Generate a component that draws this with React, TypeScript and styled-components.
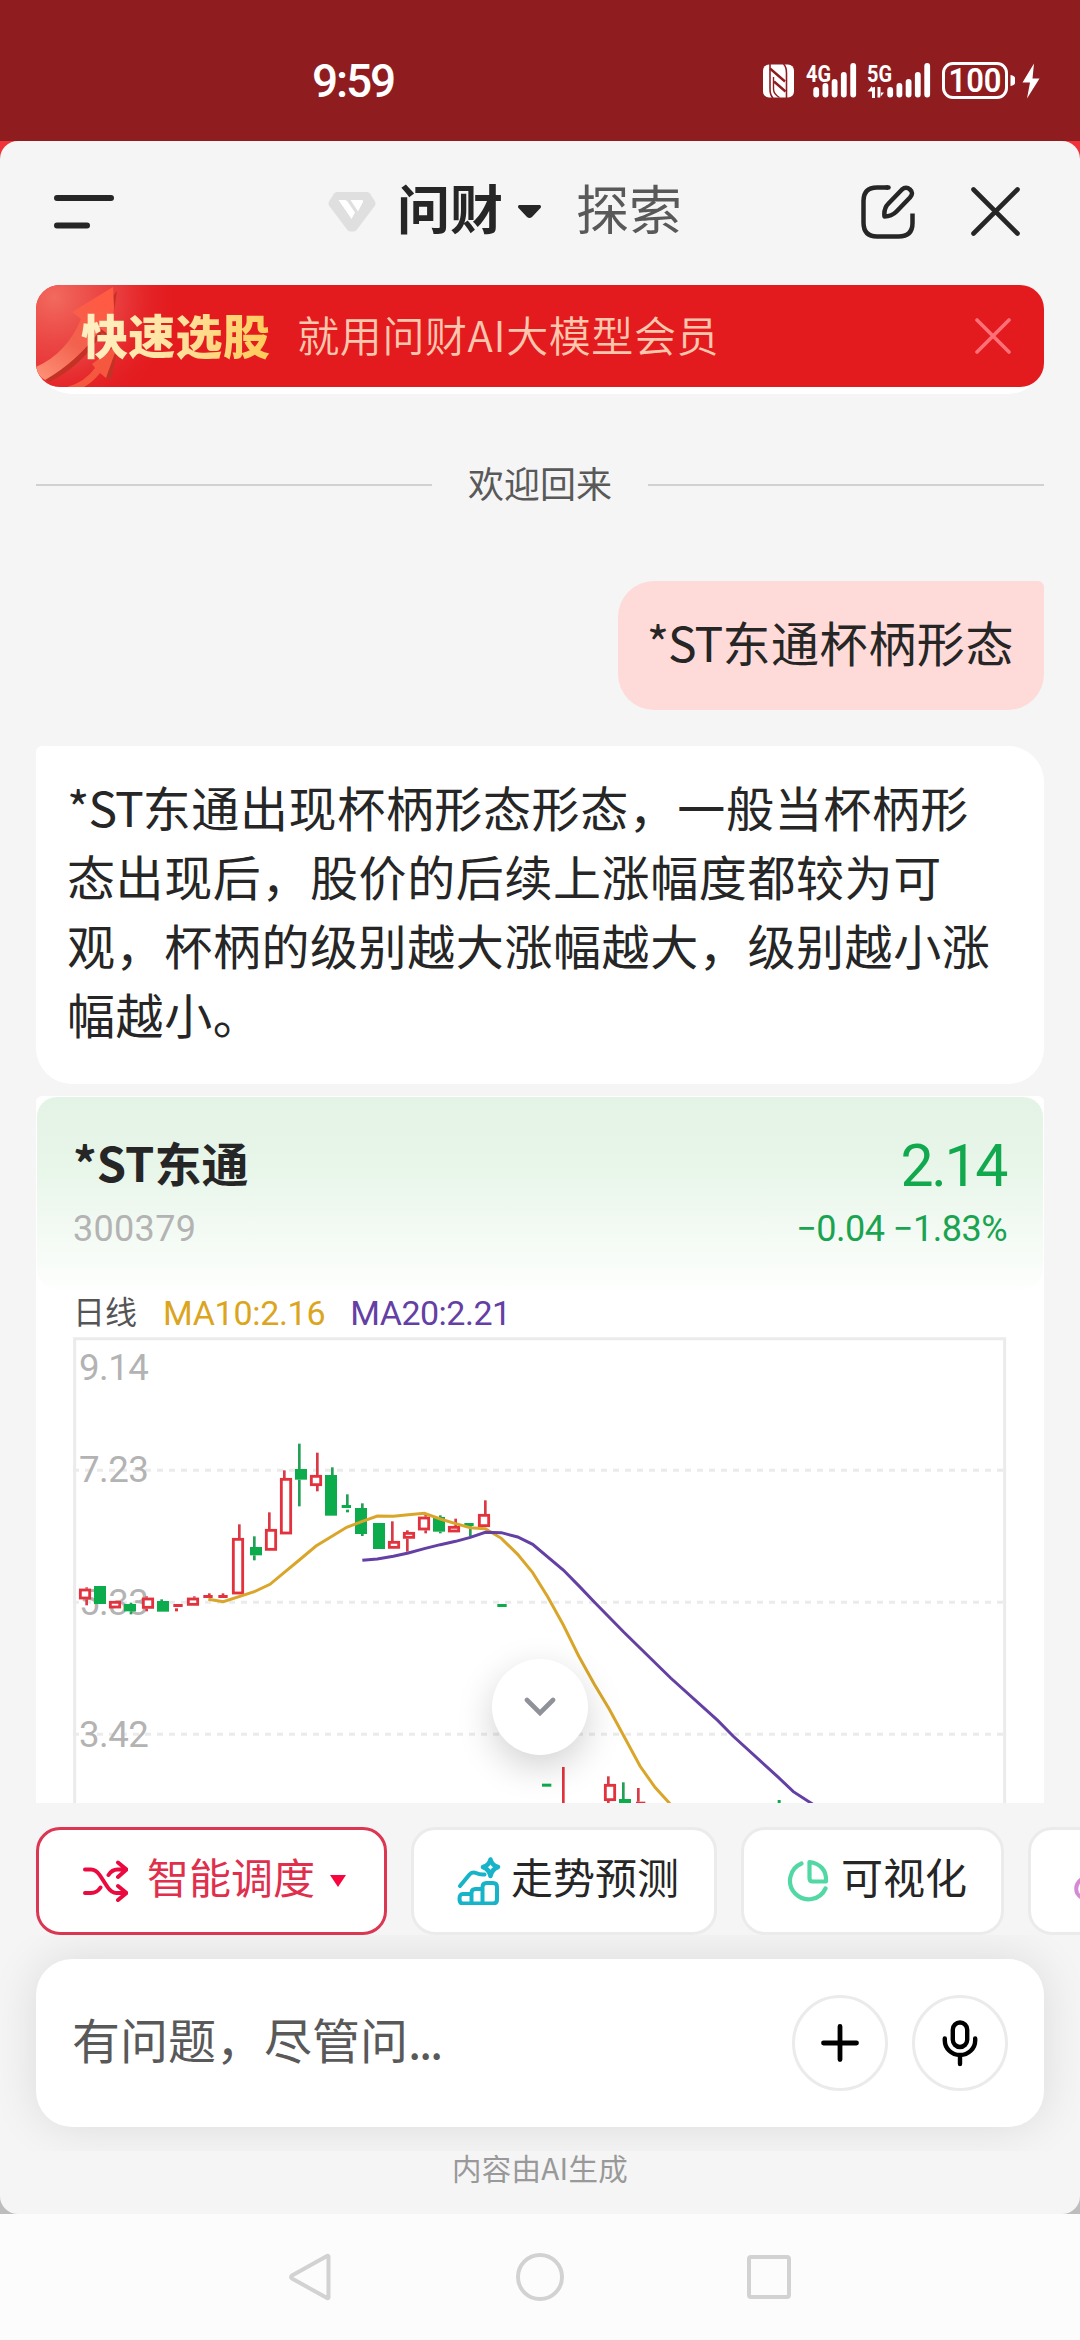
import React from 'react';
import styled, { createGlobalStyle } from 'styled-components';

const CJK = '"Noto Sans CJK SC", "Noto Sans", sans-serif';
const NUM = 'Roboto, "Noto Sans CJK SC", sans-serif';

const GlobalStyle = createGlobalStyle`
  * { box-sizing: border-box; }
  body { margin: 0; background: #fcfcfc; font-family: ${CJK}; }
`;

const Screen = styled.div`
  width: 1080px;
  height: 2340px;
  display: flex;
  flex-direction: column;
  overflow: hidden;
`;

const StatusBar = styled.header`
  height: 141px;
  flex: none;
  background: #8f1d20;
  color: #fff;
  display: flex;
  align-items: flex-start;
  justify-content: space-between;
  padding: 55px 40px 0 312px;
`;

const Clock = styled.span`
  font: 500 46px/53px ${NUM};
  letter-spacing: -2.1px;
`;

const StatusIcons = styled.svg`
  width: 278px;
  height: 40px;
  margin-top: 6px;
  display: block;
`;

const Backdrop = styled.div`
  height: 2073px;
  flex: none;
  background: linear-gradient(#f0323a 50%, #bdbdbd 50%);
`;

const Sheet = styled.main`
  height: 100%;
  background: #f5f5f5;
  border-radius: 18px;
  display: flex;
  flex-direction: column;
  overflow: hidden;
`;

const TopBar = styled.div`
  height: 144px;
  flex: none;
  display: grid;
  grid-template-columns: 274px 1fr 274px;
  align-items: center;
  padding: 0 60px 3px 54px;
`;

const IconSvg = styled.svg<{ $w: number; $h: number }>`
  width: ${p => p.$w}px;
  height: ${p => p.$h}px;
  display: block;
  flex: none;
`;

const Tabs = styled.nav`
  display: flex;
  align-items: center;
`;

const Tab = styled.span<{ $active?: boolean }>`
  font-size: 53px;
  line-height: 70px;
  font-weight: ${p => (p.$active ? 700 : 400)};
  color: ${p => (p.$active ? '#262626' : '#595959')};
  margin-left: ${p => (p.$active ? 21 : 35)}px;
  margin-right: ${p => (p.$active ? 15 : 0)}px;
  margin-top: -9px;
  white-space: nowrap;
`;

const Actions = styled.div`
  display: flex;
  justify-content: flex-end;
  align-items: center;
  gap: 56px;
`;

const BannerBase = styled.div`
  margin: 0 36px;
  height: 109px;
  flex: none;
  background: #fff;
  border-radius: 24px 24px 36px 36px;
`;

const Banner = styled.div`
  height: 102px;
  border-radius: 24px;
  overflow: hidden;
  position: relative;
  background: #e31b1f;
  display: flex;
  align-items: center;
  padding: 0 33px 0 45px;
`;

const BannerArt = styled.svg`
  position: absolute;
  left: 0;
  top: 0;
  width: 240px;
  height: 102px;
`;

const BannerTitle = styled.strong`
  position: relative;
  font-size: 47px;
  line-height: 64px;
  font-weight: 900;
  letter-spacing: 0.3px;
  margin-top: -4px;
  background: linear-gradient(100deg, #ffefc0 10%, #ffe09a 55%, #ffcb5c 95%);
  -webkit-background-clip: text;
  background-clip: text;
  color: transparent;
`;

const BannerText = styled.span`
  flex: 1;
  margin: -4px 0 0 27px;
  font-size: 42px;
  line-height: 60px;
  font-weight: 350;
  letter-spacing: 0.6px;
  color: #ffc6ae;
  white-space: nowrap;
`;

const Welcome = styled.div`
  height: 54px;
  margin: 64px 36px 69px;
  flex: none;
  display: flex;
  align-items: center;
  gap: 36px;
  font-size: 36px;
  line-height: 50px;
  color: #595959;
  &::before,
  &::after {
    content: '';
    flex: 1;
    height: 2px;
    background: #d0d1d0;
  }
`;

const WelcomeText = styled.span`
  margin-top: -6px;
`;

const Tight = styled.span`
  letter-spacing: -1px;
`;

const UserBubble = styled.div`
  align-self: flex-end;
  flex: none;
  height: 129px;
  margin-right: 36px;
  padding: 24px 30px 0 29px;
  background: #fedbd9;
  border-radius: 36px 6px 36px 36px;
  font-size: 48px;
  line-height: 72px;
  letter-spacing: 0.6px;
  color: #262626;
`;

const ReplyBubble = styled.div`
  flex: none;
  height: 338px;
  margin: 36px 36px 12px;
  padding: 26px 31px 0;
  background: #fff;
  border-radius: 6px 36px 36px 36px;
  font-size: 48px;
  line-height: 69px;
  letter-spacing: 0.6px;
  color: #262626;
  white-space: nowrap;
`;

const StockCard = styled.section`
  flex: none;
  height: 707px;
  margin: 0 36px;
  padding: 1px 1px 0;
  background: #fff;
  border-radius: 6px 6px 0 0;
  overflow: hidden;
  position: relative;
`;

const Quote = styled.div`
  height: 192px;
  border-radius: 20px;
  background: linear-gradient(#e3f3e5, #e9f6ea 40%, #fdfefd);
  padding: 30px 36px 0;
`;

const QuoteRow = styled.div<{ $h: number }>`
  display: flex;
  justify-content: space-between;
  align-items: center;
  height: ${p => p.$h}px;
`;

const StockName = styled.span`
  font-size: 47px;
  line-height: 68px;
  font-weight: 700;
  margin-top: -2px;
  color: #262626;
`;

const Price = styled.span`
  font: 400 59px/70px ${NUM};
  letter-spacing: -2.4px;
  margin: 6px 1px 0 0;
  color: #12a84d;
`;

const StockCode = styled.span`
  font: 400 36px/44px ${NUM};
  letter-spacing: 0.3px;
  margin-top: 5px;
  color: #b3b3b3;
`;

const Change = styled.span`
  font: 400 36px/44px ${NUM};
  letter-spacing: -0.5px;
  margin-top: 5px;
  color: #1aa350;
`;

const Legend = styled.div`
  display: flex;
  align-items: center;
  height: 47px;
  padding-left: 36px;
`;

const Period = styled.span`
  font-size: 32px;
  line-height: 44px;
  color: #555;
  margin: -5px 26px 0 0;
`;

const Average = styled.span<{ $color: string; $tracking: number }>`
  font: 400 34px/44px ${NUM};
  letter-spacing: ${p => p.$tracking}px;
  color: ${p => p.$color};
  margin-right: 25px;
`;

const Chart = styled.svg`
  display: block;
  width: 934px;
  height: 467px;
  margin-left: 36px;
`;

const ScrollDown = styled.button`
  position: absolute;
  left: 456px;
  top: 563px;
  width: 96px;
  height: 96px;
  padding: 0;
  border: 0;
  border-radius: 50%;
  background: #fff;
  box-shadow: 0 12px 36px rgba(0, 0, 0, 0.18);
  display: flex;
  align-items: center;
  justify-content: center;
`;

const Chips = styled.div`
  flex: none;
  height: 132px;
  padding: 24px 0 0 36px;
  display: flex;
  gap: 24px;
  overflow: hidden;
`;

const Chip = styled.button<{ $w: number; $active?: boolean }>`
  flex: none;
  width: ${p => p.$w}px;
  height: 108px;
  border: 3px solid ${p => (p.$active ? '#db3652' : '#ebebeb')};
  border-radius: 24px;
  background: #fff;
  padding: 0 0 0 43px;
  display: flex;
  align-items: center;
  font-family: ${CJK};
  font-size: 42px;
  line-height: 60px;
  color: ${p => (p.$active ? '#e02f4c' : '#262626')};
  white-space: nowrap;
`;

const ChipLabel = styled.span<{ $gap: number }>`
  margin: -10px 0 0 ${p => p.$gap}px;
`;

const Caret = styled.i`
  margin-left: 15px;
  border: solid transparent;
  border-width: 12px 8px 0;
  border-top-color: #f8043f;
`;

const Composer = styled.div`
  flex: none;
  height: 216px;
  padding: 24px 36px;
  overflow: hidden;
`;

const InputBox = styled.div`
  height: 168px;
  border-radius: 36px;
  background: #fff;
  box-shadow: 0 0 48px rgba(0, 0, 0, 0.11);
  display: flex;
  align-items: center;
  gap: 24px;
  padding: 0 36px;
`;

const Placeholder = styled.span`
  flex: 1;
  font-size: 48px;
  line-height: 70px;
  margin-top: -10px;
  color: #595959;
`;

const Ellipsis = styled.span`
  letter-spacing: -2.4px;
`;

const RoundButton = styled.button`
  width: 96px;
  height: 96px;
  padding: 0;
  border: 3px solid #ebebeb;
  border-radius: 50%;
  background: #fff;
  display: flex;
  align-items: center;
  justify-content: center;
`;

const Disclaimer = styled.p`
  margin: -2px 0 0;
  text-align: center;
  font-size: 29.5px;
  line-height: 36px;
  letter-spacing: 0.3px;
  color: #999;
`;

const NavBar = styled.footer`
  flex: none;
  height: 126px;
  background: #fcfcfc;
  display: flex;
  justify-content: center;
  align-items: center;
  gap: 182px;
`;

/* Chart geometry is stored in thirds of a CSS pixel. */
type Candle = {
  x: number;
  top: number;
  bottom: number;
  up?: boolean;
  wick?: number;
  hi?: number;
  lo?: number;
  w?: number;
};

const candles: Candle[] = [
  { x: 57, top: 806, bottom: 838, up: true, wick: 80, hi: 802, lo: 856 },
  { x: 102, top: 798, bottom: 852 },
  { x: 147, top: 843, bottom: 865, up: true },
  { x: 192, top: 852, bottom: 874, wick: 213, hi: 848, lo: 883 },
  { x: 246, top: 833, bottom: 866, up: true, wick: 260, hi: 829, lo: 874 },
  { x: 291, top: 843, bottom: 875, wick: 305, hi: 838 },
  { x: 340, top: 852, bottom: 861, up: true, w: 28 },
  { x: 345, top: 865, bottom: 874, up: true, w: 9 },
  { x: 381, top: 833, bottom: 857, up: true, wick: 403, hi: 829 },
  { x: 430, top: 825, bottom: 834, up: true, wick: 448, hi: 820, w: 28 },
  { x: 475, top: 825, bottom: 834, up: true, wick: 489, hi: 820, w: 28 },
  { x: 516, top: 654, bottom: 823, up: true, wick: 538, hi: 613 },
  { x: 570, top: 681, bottom: 706, wick: 583, hi: 649, lo: 721 },
  { x: 615, top: 627, bottom: 692, up: true, wick: 628, hi: 577 },
  { x: 660, top: 474, bottom: 643, up: true, wick: 673, hi: 451 },
  { x: 705, top: 447, bottom: 479, wick: 718, hi: 371, lo: 559 },
  { x: 750, top: 465, bottom: 498, up: true, wick: 772, hi: 398, lo: 514 },
  { x: 795, top: 465, bottom: 587, wick: 817, hi: 442 },
  { x: 845, top: 555, bottom: 564, wick: 862, hi: 523, w: 28 },
  { x: 858, top: 569, bottom: 577, w: 9 },
  { x: 885, top: 564, bottom: 642, wick: 907, hi: 550, lo: 648 },
  { x: 939, top: 609, bottom: 687 },
  { x: 984, top: 663, bottom: 686, up: true, wick: 997, hi: 604 },
  { x: 1029, top: 636, bottom: 656, up: true, wick: 1042, hi: 631, lo: 695 },
  { x: 1074, top: 590, bottom: 631, up: true, wick: 1097, hi: 585, lo: 640 },
  { x: 1119, top: 591, bottom: 635, wick: 1141, hi: 586, lo: 640 },
  { x: 1164, top: 618, bottom: 637, up: true, wick: 1187, hi: 596 },
  { x: 1213, top: 609, bottom: 618, wick: 1231, lo: 650, w: 28 },
  { x: 1254, top: 582, bottom: 621, up: true, wick: 1276, hi: 541 },
  { x: 1312, top: 852, bottom: 861, w: 28 },
  { x: 1446, top: 1391, bottom: 1400, w: 28 },
  { x: 1506, top: 1341, bottom: 1460, up: true, w: 8 },
  { x: 1632, top: 1392, bottom: 1443, up: true, wick: 1645, hi: 1369, lo: 1460 },
  { x: 1677, top: 1437, bottom: 1460, wick: 1690, hi: 1387 },
  { x: 1728, top: 1445, bottom: 1454, up: true, wick: 1735, hi: 1404, w: 28 },
  { x: 2153, top: 1440, bottom: 1460, w: 9 },
];

const ma10 =
  '445,838 490,845 583,815 630,793 673,757 718,720 768,678 860,622 907,604 952,588 1000,589 1045,584 1093,580 1141,597 1187,611 1231,623 1276,626 1324,655 1373,703 1418,758 1463,830 1510,915 1556,1008 1603,1093 1648,1168 1691,1247 1740,1338 1785,1402 1838,1460';
const ma20 =
  '907,721 952,717 1000,709 1045,699 1093,686 1141,674 1187,664 1231,652 1276,637 1324,638 1373,651 1418,673 1510,750 1556,797 1605,848 1691,936 1832,1074 1973,1201 2019,1248 2156,1373 2200,1415 2262,1455';

const labels = [
  { text: '9.14', y: 180 },
  { text: '7.23', y: 487 },
  { text: '5.33', y: 885 },
  { text: '3.42', y: 1280 },
];

function CandleMark({ x, top, bottom, up, wick, hi, lo, w = 36 }: Candle) {
  const color = up ? '#e2323e' : '#0cab4c';
  const line = up ? '#d93a45' : '#22a055';
  const hollow = up && w === 36;
  return (
    <g>
      {wick !== undefined && hi !== undefined && (
        <rect x={wick - 4} y={hi} width={8} height={top - hi} fill={line} />
      )}
      {wick !== undefined && lo !== undefined && (
        <rect x={wick - 4} y={bottom} width={8} height={lo - bottom} fill={line} />
      )}
      {hollow ? (
        <rect x={x + 4} y={top + 4} width={w - 8} height={bottom - top - 8} fill="#fff" stroke={color} strokeWidth={8.5} />
      ) : (
        <rect x={x} y={top} width={w} height={bottom - top} fill={color} />
      )}
    </g>
  );
}

function PriceChart() {
  return (
    <Chart viewBox="39 48 2802 1401">
      <path d="M44 1460V56H2834V1460" fill="none" stroke="#ebebeb" strokeWidth={9} />
      {[451, 847, 1243].map(y => (
        <line key={y} x1={39} x2={2834} y1={y} y2={y} stroke="#ebebeb" strokeWidth={9} strokeDasharray="18 18" />
      ))}
      {labels.map(l => (
        <text key={l.text} x={57} y={l.y} fontFamily={NUM} fontSize={110} letterSpacing={-1.5} fill="#b3b3b3">
          {l.text}
        </text>
      ))}
      {candles.map(c => (
        <CandleMark key={c.x} {...c} />
      ))}
      <polyline points={ma10} fill="none" stroke="#d9a62a" strokeWidth={9} />
      <polyline points={ma20} fill="none" stroke="#6440a4" strokeWidth={9} />
    </Chart>
  );
}

const signalBars = [
  { dx: 0, y: 26 },
  { dx: 9.2, y: 22 },
  { dx: 18.4, y: 18 },
  { dx: 27.6, y: 11 },
  { dx: 37, y: 2 },
];

function Signal({ x }: { x: number }) {
  return (
    <g>
      {signalBars.map(b => (
        <rect key={b.dx} x={x + b.dx} y={b.y} width={5.8} height={36.5 - b.y} rx={2.9} />
      ))}
    </g>
  );
}

function StatusGlyphs() {
  return (
    <StatusIcons viewBox="0 0 278 40" fill="#fff">
      <rect x={1} y={3.5} width={31} height={33} rx={6} />
      <g fill="none" stroke="#8f1d20">
        <path d="M8 3v25q0 6 3 9M24.500 37V12q0-6-3-9" strokeWidth={1.6} />
        <path d="M8 7.500L23 20.500M12 20.500L23.500 30.500" strokeWidth={2.4} />
        <path d="M11.500 16v12q0 5 6 8.500" strokeWidth={1.4} />
      </g>
      <text x={44} y={20.500} fontFamily={NUM} fontSize={23} fontWeight={700} textLength={25} lengthAdjust="spacingAndGlyphs">4G</text>
      <Signal x={51.300} />
      <text x={105} y={20.500} fontFamily={NUM} fontSize={23} fontWeight={700} textLength={25} lengthAdjust="spacingAndGlyphs">5G</text>
      <path d="M110 26.500V37h3V26zM105.500 30.500l4.500-5.500v5.500zM115.500 26v10.500h3V26zM118 36.500v-5h4z" />
      <Signal x={125.300} />
      <rect x={181.500} y={2.500} width={63} height={34} rx={9.500} fill="none" stroke="#fff" strokeWidth={3} />
      <text x={186.500} y={31} fontFamily={NUM} fontSize={33} fontWeight={600} textLength={53} lengthAdjust="spacingAndGlyphs">100</text>
      <path d="M248.500 14q4.500 1 4.500 3v5q0 2-4.500 3z" />
      <path d="M272 2.500L260.500 21.500h7.500L265 37.500l12.500-20H270.500z" />
    </StatusIcons>
  );
}

export default function App() {
  return (
    <Screen>
      <GlobalStyle />
      <StatusBar>
        <Clock>9:59</Clock>
        <StatusGlyphs />
      </StatusBar>
      <Backdrop>
        <Sheet>
          <TopBar>
            <IconSvg $w={60} $h={34} viewBox="0 0 60 34">
              <path d="M3 3h54M3 30.500h30" stroke="#262626" strokeWidth={6} strokeLinecap="round" />
            </IconSvg>
            <Tabs>
              <IconSvg $w={48} $h={40} viewBox="0 0 48 40">
                <path d="M9 0h30q2 0 3 1.500l5 8q1 2 0 4L29 37.500q-1.500 2-3 2h-4q-1.500 0-3-2L1 13.500q-1-2 0-4l5-8Q7 0 9 0z" fill="#dfdfdf" />
                <path d="M10.500 8H17q1.500 0 2.500 1.500l7.500 11-3.500 6.500zM22.500 8H34q1.500 0 1 2L30 19.500z" fill="#fff" />
              </IconSvg>
              <Tab $active>问财</Tab>
              <IconSvg $w={23} $h={13} viewBox="0 0 23 13">
                <path d="M1 0h21q2 1.500 0 3.500l-8 8.500q-2.500 2-5 0L1 3.500Q-1 1.500 1 0z" fill="#262626" />
              </IconSvg>
              <Tab>探索</Tab>
            </Tabs>
            <Actions>
              <IconSvg $w={54} $h={54} viewBox="0 0 54 54" fill="none" stroke="#262626" strokeWidth={4.500}>
                <path d="M27 2.500H16Q2.500 2.500 2.500 16v21.500Q2.500 51.500 16 51.500h21.500Q51.500 51.500 51.500 38V28.500" />
                <path d="M26 2.500h1.500" strokeLinecap="round" />
                <path d="M23.500 31.500q-1-8 4-13L41 4.500q4-3.500 8 0t0 8L35.500 26.500q-5 5-12 5z" strokeLinejoin="round" />
              </IconSvg>
              <IconSvg $w={49} $h={49} viewBox="0 0 49 49">
                <path d="M2.500 2.500l44 44M46.500 2.500l-44 44" stroke="#262626" strokeWidth={4.600} strokeLinecap="round" />
              </IconSvg>
            </Actions>
          </TopBar>

          <BannerBase>
            <Banner>
              <BannerArt viewBox="0 0 240 102">
                <defs>
                  <radialGradient id="glow" gradientUnits="userSpaceOnUse" cx="18" cy="12" r="125">
                    <stop offset="0" stopColor="#f26a5e" />
                    <stop offset="0.55" stopColor="#ea4343" stopOpacity="0.75" />
                    <stop offset="1" stopColor="#e31b1f" stopOpacity="0" />
                  </radialGradient>
                  <linearGradient id="arrow" x1="0" y1="1" x2="0.6" y2="0">
                    <stop offset="0" stopColor="#ff9478" />
                    <stop offset="0.5" stopColor="#f2624e" />
                    <stop offset="1" stopColor="#ff5a43" />
                  </linearGradient>
                </defs>
                <rect width={240} height={102} fill="url(#glow)" />
                <path d="M81 6L74 52l-8-4Q45 82 13 97L9 94z" fill="#c43226" />
                <path d="M77 2L36 27l9 7Q31 68 0 82q0 8 9 13Q42 76 65 44l11 8 2-30z" fill="url(#arrow)" />
                <path d="M82 62l-7 33-6-3z" fill="#c43226" />
                <path d="M31 102q18-5 28-19l-3-4 26-20-12 34-6-5q-7 9-16 14z" fill="#f5583f" />
              </BannerArt>
              <BannerTitle>快速选股</BannerTitle>
              <BannerText>就用问财AI大模型会员</BannerText>
              <IconSvg $w={36} $h={36} viewBox="0 0 36 36">
                <path d="M2 2l32 32M34 2L2 34" stroke="#ff7077" strokeWidth={3.600} strokeLinecap="round" />
              </IconSvg>
            </Banner>
          </BannerBase>

          <Welcome>
            <WelcomeText>欢迎回来</WelcomeText>
          </Welcome>

          <UserBubble>
            <Tight>*ST</Tight>东通杯柄形态
          </UserBubble>

          <ReplyBubble>
            <Tight>*ST</Tight>东通出现杯柄形态形态，一般当杯柄形
            <br />
            态出现后，股价的后续上涨幅度都较为可
            <br />
            观，杯柄的级别越大涨幅越大，级别越小涨
            <br />
            幅越小。
          </ReplyBubble>

          <StockCard>
            <Quote>
              <QuoteRow $h={72}>
                <StockName>*ST东通</StockName>
                <Price>2.14</Price>
              </QuoteRow>
              <QuoteRow $h={54}>
                <StockCode>300379</StockCode>
                <Change>−0.04 −1.83%</Change>
              </QuoteRow>
            </Quote>
            <Legend>
              <Period>日线</Period>
              <Average $color="#dba520" $tracking={-0.3}>MA10:2.16</Average>
              <Average $color="#6440a4" $tracking={-0.5}>MA20:2.21</Average>
            </Legend>
            <PriceChart />
            <ScrollDown aria-label="scroll down">
              <IconSvg $w={32} $h={20} viewBox="0 0 32 20">
                <path d="M3 3l13 13L29 3" fill="none" stroke="#8f9299" strokeWidth={4.600} strokeLinecap="round" />
              </IconSvg>
            </ScrollDown>
          </StockCard>

          <Chips>
            <Chip $w={351} $active>
              <IconSvg $w={46} $h={42} viewBox="0 0 46 42" fill="none" stroke="#ea0a40" strokeWidth={4} strokeLinecap="round" strokeLinejoin="round">
                <path d="M3 9.500h6q5 0 9 6l7.500 11.500q4 6 9 6H44M3 33h6q6 0 9.500-5.500M26.500 15q3.500-5.500 9-5.500H44M36 2.500l8.500 7L36 17M36 26l8.500 7-8.500 7" />
              </IconSvg>
              <ChipLabel $gap={19}>智能调度</ChipLabel>
              <Caret />
            </Chip>
            <Chip $w={306}>
              <IconSvg $w={44} $h={48} viewBox="0 0 44 48" fill="none" stroke="#17b3c8" strokeWidth={4} strokeLinecap="round" strokeLinejoin="round">
                <path d="M3 29l9.500-11.500q2.500-3 6.500-1.500 4 2 8.500 1.500M6 37h8.500v9.500H6q-3.500 0-3.500-4.800T6 37zM14.500 46.500V36q0-4 4-4h7v14.500zM25.500 46.500V30q0-4 4-4H36q4 0 4 4v12.500q0 4-4 4z" />
                <path d="M33.500 2.500q1.500 6 7.500 7.500-6 2-7.500 9-1.500-7-7.500-9 6-1.500 7.500-7.500z" strokeWidth={4.500} />
              </IconSvg>
              <ChipLabel $gap={10}>走势预测</ChipLabel>
            </Chip>
            <Chip $w={263}>
              <IconSvg $w={42} $h={44} viewBox="0 0 42 44" fill="none" stroke="#52d8a4" strokeWidth={4.200} strokeLinecap="round" strokeLinejoin="round">
                <path d="M14.500 4.500A18.600 18.600 0 1 0 38.500 29.500" />
                <path d="M22.500 3v16q0 3.500 3 3.500h13.500Q39.500 14 35 9T22.500 3z" />
              </IconSvg>
              <ChipLabel $gap={12}>可视化</ChipLabel>
            </Chip>
            <Chip $w={306}>
              <IconSvg $w={44} $h={44} viewBox="0 0 44 44" fill="none" stroke="#d58ad2" strokeWidth={4}>
                <path d="M9 19Q0 25 3 34q5 8 14 4L9 26z" />
                <path d="M9 20v-6" strokeLinecap="round" />
              </IconSvg>
            </Chip>
          </Chips>

          <Composer>
            <InputBox>
              <Placeholder>
                有问题，尽管问<Ellipsis>...</Ellipsis>
              </Placeholder>
              <RoundButton aria-label="add">
                <IconSvg $w={40} $h={40} viewBox="0 0 40 40">
                  <path d="M20 3.500v33M3.500 20h33" stroke="#000" strokeWidth={4.800} strokeLinecap="round" />
                </IconSvg>
              </RoundButton>
              <RoundButton aria-label="voice">
                <IconSvg $w={40} $h={48} viewBox="0 0 40 48" fill="none" stroke="#000" strokeWidth={4.400} strokeLinecap="round">
                  <rect x={12.800} y={3.500} width={14.400} height={24.500} rx={7.200} />
                  <path d="M4.800 19.500v2a15.200 14.500 0 0 0 30.400 0v-2M20 36v9" />
                </IconSvg>
              </RoundButton>
            </InputBox>
          </Composer>

          <Disclaimer>内容由AI生成</Disclaimer>
        </Sheet>
      </Backdrop>
      <NavBar>
        <IconSvg $w={48} $h={50} viewBox="0 0 48 50">
          <path d="M42.500 4.500v41q0 1-1.500.5L6 26.500q-2-1.500 0-3L41 4q1.500-.5 1.500.5z" fill="none" stroke="#d2d2d2" strokeWidth={4} strokeLinejoin="round" />
        </IconSvg>
        <IconSvg $w={48} $h={48} viewBox="0 0 48 48">
          <circle cx={24} cy={24} r={22} fill="none" stroke="#d2d2d2" strokeWidth={4} />
        </IconSvg>
        <IconSvg $w={48} $h={48} viewBox="0 0 48 48">
          <rect x={3} y={4} width={40} height={40} rx={2} fill="none" stroke="#d2d2d2" strokeWidth={4} />
        </IconSvg>
      </NavBar>
    </Screen>
  );
}
